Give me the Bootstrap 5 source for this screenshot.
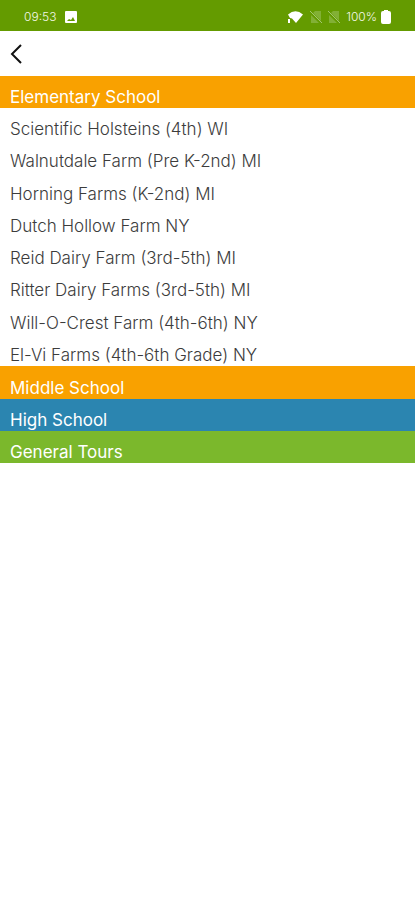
<!DOCTYPE html>
<html lang="en">
<head>
<meta charset="utf-8">
<meta name="viewport" content="width=device-width, initial-scale=1">
<title>Farm Tours</title>
<link href="https://cdn.jsdelivr.net/npm/bootstrap@5.3.0/dist/css/bootstrap.min.css" rel="stylesheet">
<style>
  body { font-family: Inter, "Liberation Sans", sans-serif; font-weight: 300; background: #fff; }
  .status-bar { height: 31px; background: #649b00; font-size: 12px; color: #f3f8e8; padding: 2px 24px 0; }
  .status-icons { gap: 6px; }
  .top-nav { height: 45px; padding-left: 8px; }
  .tour-row { height: 32px; padding: 10px 10px 0; font-size: 17px; line-height: 22px; white-space: nowrap; }
  .tour-link { color: #3c3c3c; }
  .section-head { width: 100%; border: 0; color: #fff; font-weight: 400; text-align: left; }
  .orange { background: #f9a100; }
  .blue { background: #2b85b0; }
  .green { background: #7bb82c; }
  .tour-list { min-height: 258px; }
  .tour-list + .section-head { height: 33px; padding-top: 11px; }
</style>
</head>
<body>
<header>
  <div class="status-bar d-flex align-items-center justify-content-between">
    <div class="d-flex align-items-center gap-2">
      <span>09:53</span>
      <svg width="14" height="14" viewBox="0 0 14 14" aria-hidden="true"><rect x="1" y="1" width="12" height="12" rx="1" fill="#fff"/><path d="M3 11l2-2 2 1 2-3 2 4z" fill="#649b00"/></svg>
    </div>
    <div class="status-icons d-flex align-items-center">
      <svg width="16" height="14" viewBox="0 0 16 14" aria-hidden="true"><path d="M0 4.500Q7.500-2 15 4.500L8 13 4 8.500 2 8z" fill="#fff"/><path d="M0 9h2v4H0z" fill="#fff"/></svg>
      <svg width="12" height="14" viewBox="0 0 12 14" aria-hidden="true"><path d="M5 1h6v10L3 3zM1 5l8 8H1z" fill="#82b035"/><path d="M0 1l12 12" stroke="#a2c770" stroke-width="1"/></svg>
      <svg width="12" height="14" viewBox="0 0 12 14" aria-hidden="true"><path d="M5 1h6v10L3 3zM1 5l8 8H1z" fill="#82b035"/><path d="M0 1l12 12" stroke="#a2c770" stroke-width="1"/></svg>
      <div class="d-flex align-items-center gap-1">
        <span>100%</span>
        <svg width="10" height="14" viewBox="0 0 10 14" aria-hidden="true"><path d="M3 0h4v1h1q2 0 2 2v9q0 2-2 2H2q-2 0-2-2V3q0-2 2-2h1z" fill="#fff"/></svg>
      </div>
    </div>
  </div>
  <nav class="top-nav d-flex align-items-center" aria-label="Page">
    <button type="button" class="btn p-0 border-0 d-flex" aria-label="Back">
      <svg width="16" height="20" viewBox="0 0 16 20" aria-hidden="true"><path d="M13 1L4 10l9 9" fill="none" stroke="#111" stroke-width="2"/></svg>
    </button>
  </nav>
</header>
<main>
  <button type="button" class="section-head tour-row orange d-block" aria-expanded="true">Elementary School</button>
  <ul class="tour-list list-unstyled mb-0 d-flex flex-column justify-content-between">
    <li><a href="#" class="tour-row tour-link d-block text-decoration-none">Scientific Holsteins (4th) WI</a></li>
    <li><a href="#" class="tour-row tour-link d-block text-decoration-none">Walnutdale Farm (Pre K-2nd) MI</a></li>
    <li><a href="#" class="tour-row tour-link d-block text-decoration-none">Horning Farms (K-2nd) MI</a></li>
    <li><a href="#" class="tour-row tour-link d-block text-decoration-none">Dutch Hollow Farm NY</a></li>
    <li><a href="#" class="tour-row tour-link d-block text-decoration-none">Reid Dairy Farm (3rd-5th) MI</a></li>
    <li><a href="#" class="tour-row tour-link d-block text-decoration-none">Ritter Dairy Farms (3rd-5th) MI</a></li>
    <li><a href="#" class="tour-row tour-link d-block text-decoration-none">Will-O-Crest Farm (4th-6th) NY</a></li>
    <li><a href="#" class="tour-row tour-link d-block text-decoration-none">El-Vi Farms (4th-6th Grade) NY</a></li>
  </ul>
  <button type="button" class="section-head tour-row orange d-block" aria-expanded="false">Middle School</button>
  <button type="button" class="section-head tour-row blue d-block" aria-expanded="false">High School</button>
  <button type="button" class="section-head tour-row green d-block" aria-expanded="false">General Tours</button>
</main>
<script src="https://cdn.jsdelivr.net/npm/bootstrap@5.3.0/dist/js/bootstrap.bundle.min.js"></script>
</body>
</html>
